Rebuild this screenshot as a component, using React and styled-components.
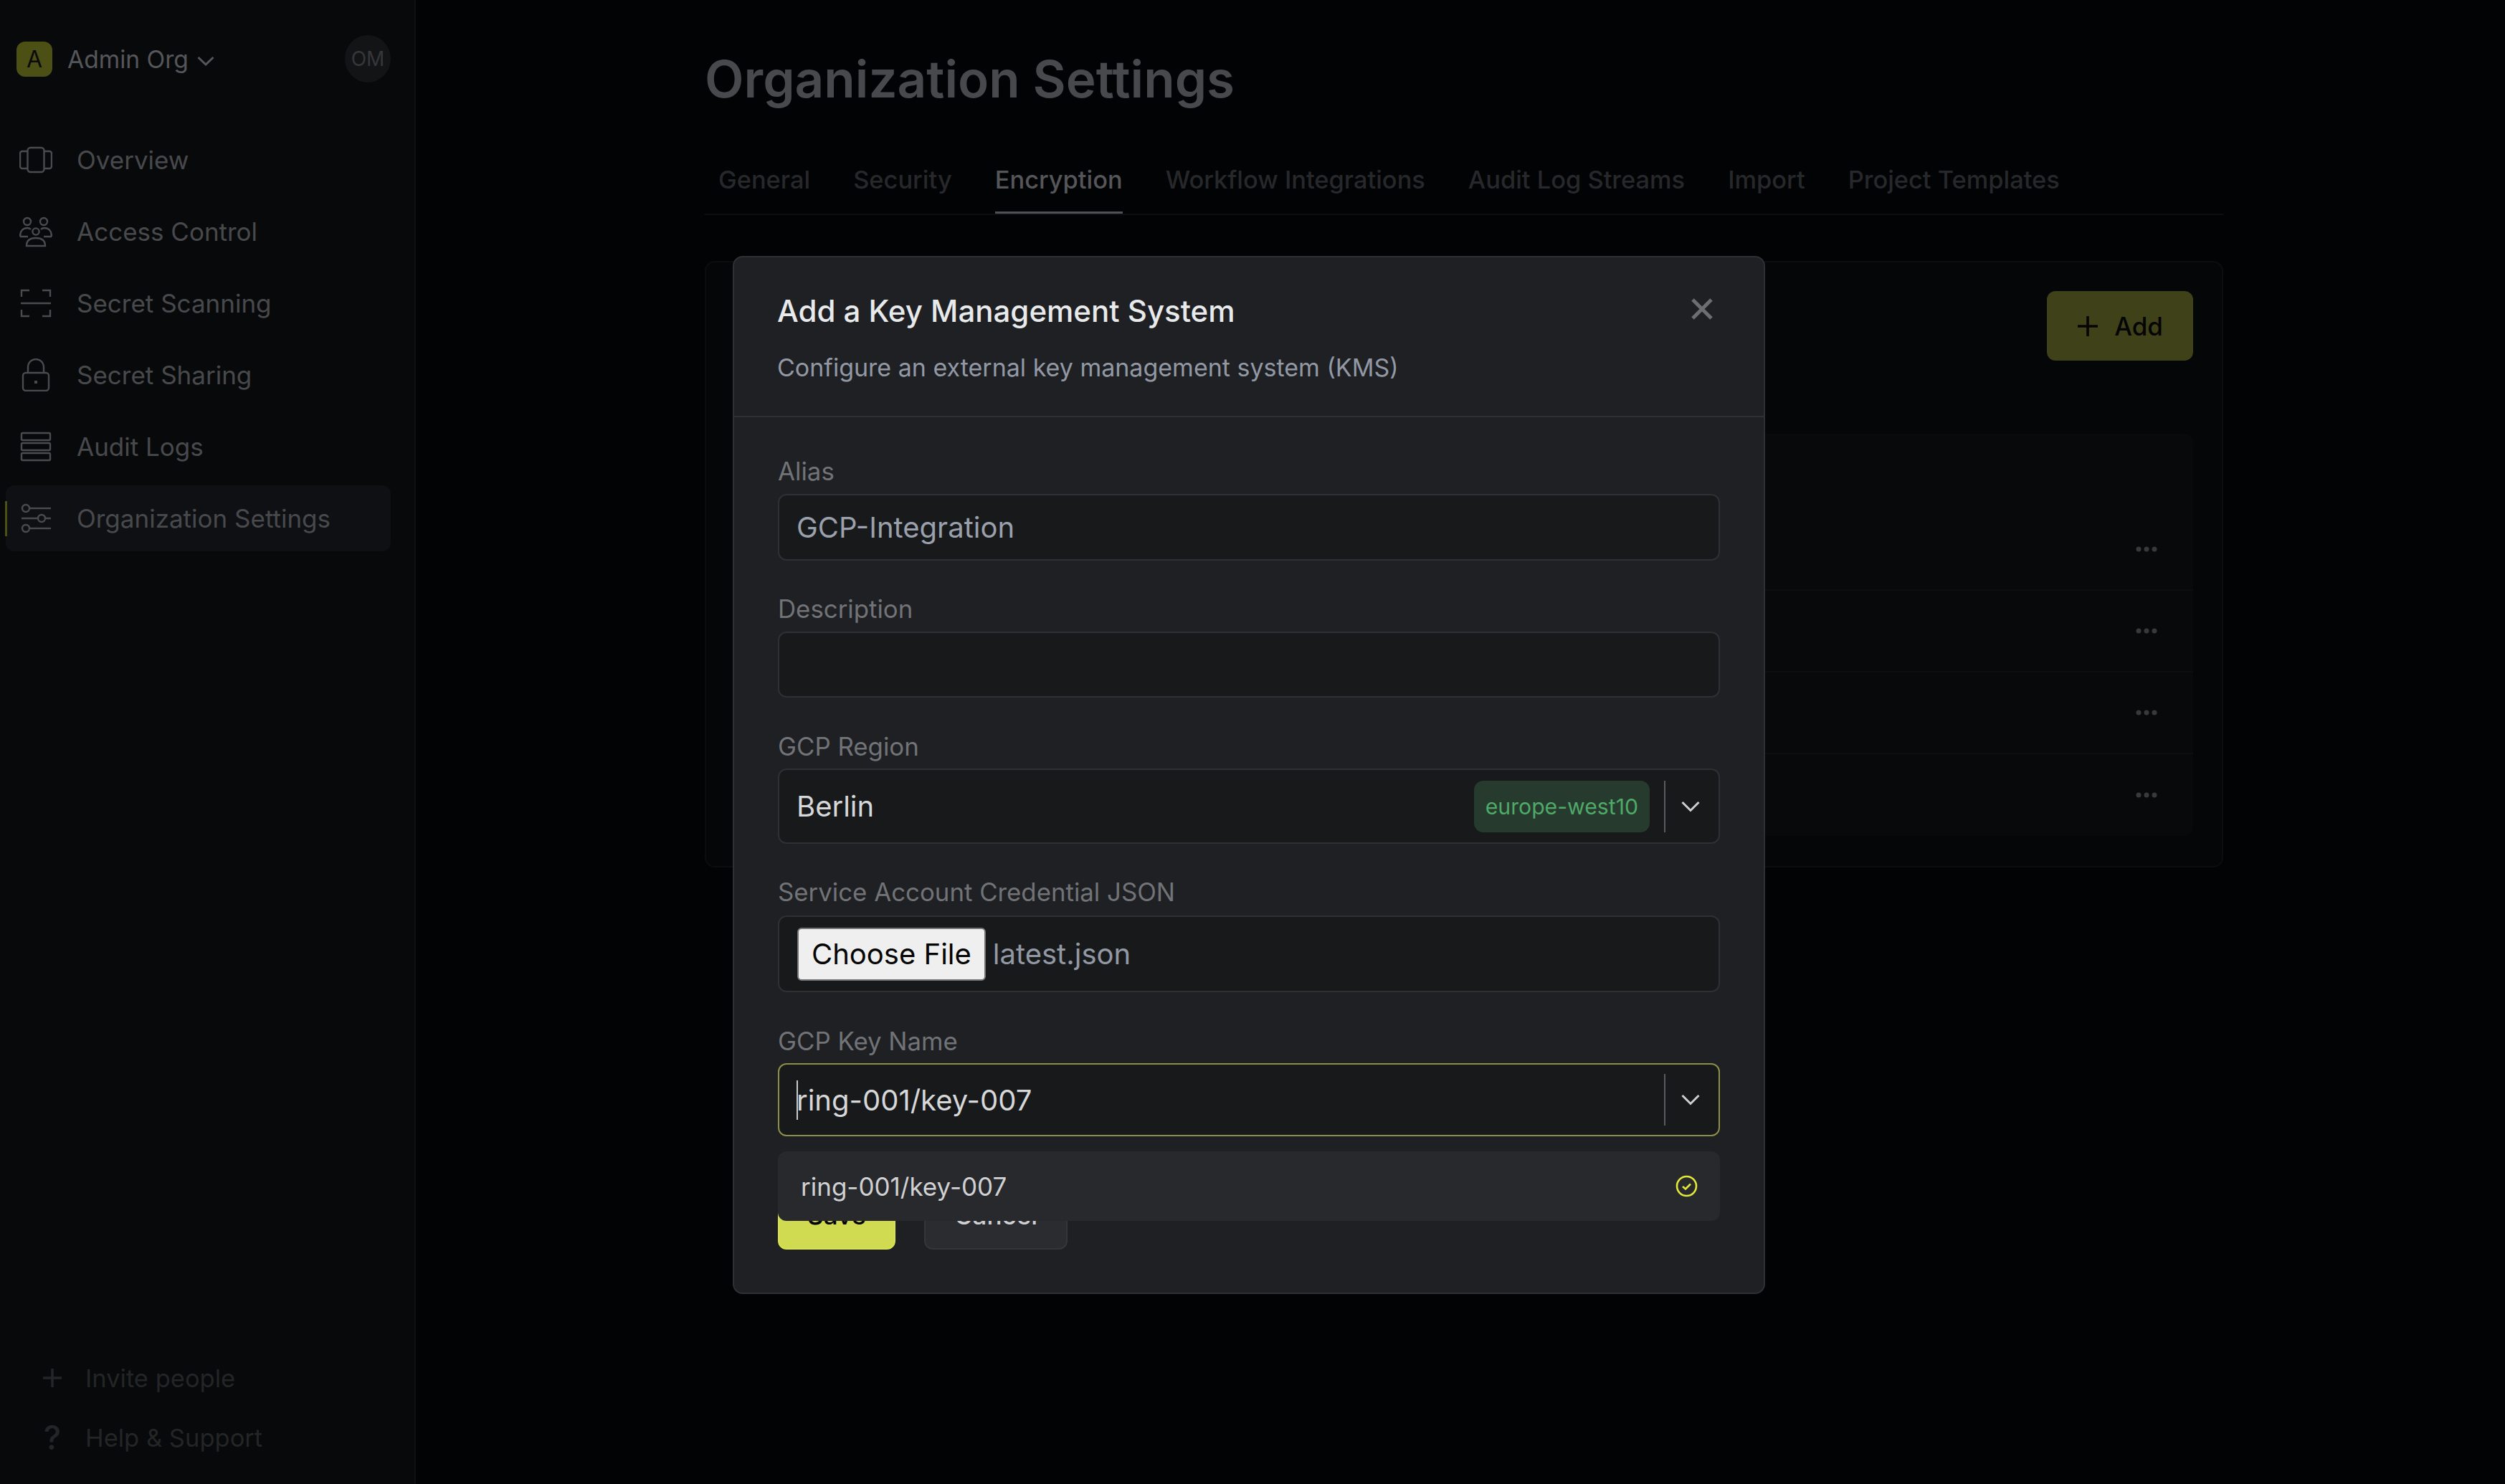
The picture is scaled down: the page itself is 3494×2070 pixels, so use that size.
import styled, { createGlobalStyle } from "styled-components";

const GlobalStyle = createGlobalStyle`
  html, body {
    margin: 0;
    padding: 0;
    background: #020304;
    font-family: "Inter", "Liberation Sans", sans-serif;
  }
  * {
    box-sizing: border-box;
  }
`;

const Page = styled.div`
  position: relative;
  display: flex;
  width: 3494px;
  height: 2070px;
  overflow: hidden;
`;

const Sidebar = styled.aside`
  display: flex;
  flex-direction: column;
  justify-content: space-between;
  width: 580px;
  height: 100%;
  padding: 49px 33px 40px 8px;
  background: #08090b;
  border-right: 2px solid #0f1012;
`;

const OrgHeader = styled.div`
  display: flex;
  align-items: center;
  justify-content: space-between;
  height: 66px;
  padding-left: 15px;
`;

const OrgName = styled.div`
  display: flex;
  align-items: center;
  font-size: 33.6px;
  color: #55565a;
`;

const OrgLogo = styled.div`
  display: flex;
  align-items: center;
  justify-content: center;
  width: 50px;
  height: 49px;
  margin-right: 21px;
  border-radius: 12px;
  background: #4d5015;
  color: #0a0a0a;
  font-size: 32px;
`;

const Caret = styled.svg`
  width: 24px;
  height: 14px;
  margin: 6px 0 0 12px;
  fill: none;
  stroke: #55565a;
  stroke-width: 3;
`;

const Avatar = styled.div`
  display: flex;
  align-items: center;
  justify-content: center;
  width: 64px;
  height: 66px;
  border-radius: 50%;
  background: #131416;
  color: #36373a;
  font-size: 28px;
`;

const Nav = styled.nav`
  display: flex;
  flex-direction: column;
  gap: 8px;
  margin-top: 62px;
`;

const NavRow = styled.div`
  position: relative;
  display: flex;
  align-items: center;
  gap: 34px;
  height: 92px;
  padding-left: 19px;
  border-radius: 12px;
  background: ${(p) => (p.$active ? "#0e1013" : "transparent")};
  color: #48494c;
  font-size: 35px;

  ${(p) =>
    p.$active &&
    `&::before {
      content: "";
      position: absolute;
      left: -1px;
      top: 22px;
      width: 3px;
      height: 49px;
      background: #4d5015;
    }`}
`;

const NavIcon = styled.svg`
  flex: none;
  width: 46px;
  height: 46px;
  fill: none;
  stroke: #4a4b4e;
  stroke-width: 2.4;
`;

const Footer = styled.div`
  display: flex;
  flex-direction: column;
  gap: 33px;
  padding-left: 51px;
`;

const FooterRow = styled.div`
  display: flex;
  align-items: center;
  gap: 32px;
  height: 50px;
  color: #232527;
  font-size: 34.5px;
`;

const FooterIcon = styled.svg`
  flex: none;
  width: 28px;
  height: 28px;
  stroke: #232527;
  stroke-width: 3.6;
`;

const FooterGlyph = styled.span`
  display: flex;
  justify-content: center;
  width: 28px;
  font-size: 46px;
  font-weight: 500;
`;

const Main = styled.main`
  width: 2118px;
  margin-left: 403px;
  padding-top: 70px;
`;

const Title = styled.h1`
  margin: 0;
  height: 80px;
  color: #48494c;
  font-size: 71px;
  font-weight: 600;
  line-height: 80px;
`;

const Tabs = styled.div`
  display: flex;
  gap: 60px;
  height: 95px;
  margin-top: 55px;
  padding-left: 19px;
  border-bottom: 2px solid #0d0e10;
`;

const Tab = styled.div`
  display: flex;
  align-items: center;
  height: 93px;
  border-bottom: 3px solid ${(p) => (p.$active ? "#505154" : "transparent")};
  color: ${(p) => (p.$active ? "#55565a" : "#27282b")};
  font-size: 34.4px;
  font-weight: 500;
`;

const Card = styled.section`
  height: 846px;
  margin-top: 64px;
  padding: 40px;
  border: 2px solid #0c0d0f;
  border-radius: 14px;
  background: #050608;
`;

const CardHead = styled.div`
  display: flex;
  justify-content: flex-end;
`;

const AddButton = styled.div`
  display: flex;
  align-items: center;
  gap: 22px;
  height: 97px;
  padding: 0 42px;
  border-radius: 12px;
  background: #3f4119;
  color: #050505;
  font-size: 35px;
  font-weight: 500;
`;

const Table = styled.div`
  margin-top: 102px;
  padding-top: 105px;
  border-radius: 12px;
  background: #08090b;
`;

const TableRow = styled.div`
  display: flex;
  align-items: center;
  justify-content: flex-end;
  height: 114px;
  padding-right: 50px;
  border-bottom: ${(p) => (p.$last ? "none" : "2px solid #0d0e10")};
`;

const Dots = styled.svg`
  width: 30px;
  height: 8px;
  fill: #39393c;
`;

const Overlay = styled.div`
  position: absolute;
  inset: 0;
  display: flex;
  justify-content: center;
  align-items: flex-start;
  padding: 357px 10px 0 0;
`;

const Modal = styled.div`
  position: relative;
  width: 1440px;
  height: 1448px;
  border: 2px solid #2e3035;
  border-radius: 14px;
  background: #1e2023;
`;

const ModalHead = styled.header`
  padding: 50px 60px 42px;
  border-bottom: 2px solid #2e3035;
`;

const ModalTitle = styled.h2`
  margin: 0;
  color: #e8e9ea;
  font-size: 42px;
  font-weight: 500;
  line-height: 50px;
`;

const ModalSubtitle = styled.p`
  margin: 29px 0 0;
  color: #9299a4;
  font-size: 34px;
  line-height: 50px;
`;

const CloseIcon = styled.svg`
  position: absolute;
  top: 56px;
  right: 70px;
  width: 32px;
  height: 32px;
  stroke: #6d6e72;
  stroke-width: 5;
`;

const ModalBody = styled.div`
  padding: 55px 61px 0;
`;

const Field = styled.div`
  position: relative;
  margin-bottom: ${(p) => p.$gap || 48}px;
`;

const Label = styled.label`
  display: block;
  height: 40px;
  margin-bottom: ${(p) => p.$gap || 12}px;
  color: #717377;
  font-size: 34.8px;
  line-height: 40px;
`;

const Control = styled.div`
  display: flex;
  align-items: center;
  height: ${(p) => p.$height}px;
  padding: 0 26px 0 24px;
  border: 2px solid ${(p) => (p.$focused ? "#8d8e48" : "#2e3036")};
  border-radius: 12px;
  background: #18191b;
  color: ${(p) => p.$color || "#d6d7d9"};
  font-size: 40px;
`;

const Value = styled.span`
  flex: 1;
`;

const Caretted = styled(Value)`
  position: relative;

  &::before {
    content: "";
    position: absolute;
    left: 0;
    top: -3px;
    bottom: -3px;
    width: 2px;
    background: #c9cacc;
  }
`;

const Badge = styled.span`
  display: flex;
  align-items: center;
  height: 72px;
  padding: 0 16px;
  border-radius: 13px;
  background: #263a2e;
  color: #4fa968;
  font-size: 30.2px;
`;

const Divider = styled.span`
  flex: none;
  width: 2px;
  height: 72px;
  margin: 0 22px 0 20px;
  background: #5a5b5e;
`;

const Chevron = styled.svg`
  flex: none;
  width: 26px;
  height: 16px;
  fill: none;
  stroke: #cfcfd1;
  stroke-width: 3;
`;

const FileButton = styled.button`
  height: 74px;
  margin: 0 10px 0 1px;
  padding: 0 18px;
  border: 2px solid #767676;
  border-radius: 6px;
  background: #efefef;
  color: #050505;
  font-family: inherit;
  font-size: 40px;
`;

const FileName = styled.span`
  color: #9299a4;
`;

const Menu = styled.div`
  position: absolute;
  top: calc(100% + 21px);
  left: 0;
  right: 0;
  display: flex;
  align-items: center;
  justify-content: space-between;
  height: 97px;
  padding: 0 31px 0 32px;
  border-radius: 12px;
  background: #27292d;
  color: #d0d1d3;
  font-size: 35px;
  z-index: 2;
`;

const Check = styled.svg`
  width: 31px;
  height: 31px;
  fill: none;
  stroke: #e2e838;
  stroke-width: 2.6;
`;

const Actions = styled.div`
  display: flex;
  gap: 40px;
  margin-top: 61px;
`;

const ActionButton = styled.div`
  display: flex;
  align-items: center;
  justify-content: center;
  width: ${(p) => p.$width}px;
  height: 97px;
  border: 2px solid ${(p) => (p.$primary ? "#d9e24f" : "#34363a")};
  border-radius: 12px;
  background: ${(p) => (p.$primary ? "#d1db52" : "#2b2c30")};
  color: ${(p) => (p.$primary ? "#050505" : "#cfd0d2")};
  font-size: 35px;
  font-weight: 500;
`;

const navItems = [
  {
    label: "Overview",
    icon: (
      <>
        <rect x="11.5" y="6" width="23" height="34" rx="4" />
        <path d="M11 11H4a3 3 0 0 0-3 3v18a3 3 0 0 0 3 3h7M35 11h7a3 3 0 0 1 3 3v18a3 3 0 0 1-3 3h-7" />
      </>
    ),
  },
  {
    label: "Access Control",
    icon: (
      <>
        <circle cx="11" cy="9" r="5" />
        <circle cx="34" cy="9" r="5" />
        <circle cx="23" cy="23" r="4.6" />
        <path d="M1 30c0-9 5-12 10-12 3 0 4 1 5 2M45 30c0-9-5-12-10-12-3 0-4 1-5 2M1 30h11M45 30H34M10 43c0-8 5-11 13-11s13 3 13 11z" />
      </>
    ),
  },
  {
    label: "Secret Scanning",
    icon: (
      <>
        <path d="M3 14V5h11M32 5h11v9M3 32v9h11M32 41h11v-9" />
        <path d="M2 23h42" />
      </>
    ),
  },
  {
    label: "Secret Sharing",
    icon: (
      <>
        <rect x="5" y="20" width="36" height="25" rx="4" />
        <path d="M12 20v-8a11 11 0 0 1 22 0v8" />
        <path d="M23 31v4" strokeWidth="4" />
      </>
    ),
  },
  {
    label: "Audit Logs",
    icon: (
      <>
        <rect x="3" y="4" width="40" height="10" rx="1.5" />
        <rect x="3" y="18" width="40" height="10" rx="1.5" />
        <rect x="3" y="32" width="40" height="10" rx="1.5" />
      </>
    ),
  },
  {
    label: "Organization Settings",
    active: true,
    icon: (
      <>
        <circle cx="9" cy="9" r="5" />
        <path d="M15 9h29" />
        <circle cx="31" cy="23" r="5" />
        <path d="M3 23h22M37 23h7" />
        <circle cx="9" cy="37" r="5" />
        <path d="M15 37h29" />
      </>
    ),
  },
];

const tabs = [
  "General",
  "Security",
  "Encryption",
  "Workflow Integrations",
  "Audit Log Streams",
  "Import",
  "Project Templates",
];

const ChevronDown = () => (
  <Chevron viewBox="0 0 26 16">
    <path d="M1.5 2 13 13.5 24.5 2" />
  </Chevron>
);

export default function App() {
  return (
    <Page>
      <GlobalStyle />
      <Sidebar>
        <div>
          <OrgHeader>
            <OrgName>
              <OrgLogo>A</OrgLogo>
              Admin Org
              <Caret viewBox="0 0 24 14">
                <path d="M1.5 2 12 12 22.5 2" />
              </Caret>
            </OrgName>
            <Avatar>OM</Avatar>
          </OrgHeader>
          <Nav>
            {navItems.map((item) => (
              <NavRow key={item.label} $active={item.active}>
                <NavIcon viewBox="0 0 46 46">{item.icon}</NavIcon>
                {item.label}
              </NavRow>
            ))}
          </Nav>
        </div>
        <Footer>
          <FooterRow>
            <FooterIcon viewBox="0 0 28 28">
              <path d="M14 1v26M1 14h26" />
            </FooterIcon>
            Invite people
          </FooterRow>
          <FooterRow>
            <FooterGlyph>?</FooterGlyph>
            Help &amp; Support
          </FooterRow>
        </Footer>
      </Sidebar>

      <Main>
        <Title>Organization Settings</Title>
        <Tabs>
          {tabs.map((t) => (
            <Tab key={t} $active={t === "Encryption"}>
              {t}
            </Tab>
          ))}
        </Tabs>
        <Card>
          <CardHead>
            <AddButton>
              <svg width="30" height="30" viewBox="0 0 30 30" stroke="#050505" strokeWidth="3.6">
                <path d="M15 1v28M1 15h28" />
              </svg>
              Add
            </AddButton>
          </CardHead>
          <Table>
            {[0, 1, 2, 3].map((i) => (
              <TableRow key={i} $last={i === 3}>
                <Dots viewBox="0 0 30 8">
                  <circle cx="4" cy="4" r="3.5" />
                  <circle cx="15" cy="4" r="3.5" />
                  <circle cx="26" cy="4" r="3.5" />
                </Dots>
              </TableRow>
            ))}
          </Table>
        </Card>
      </Main>

      <Overlay>
        <Modal>
          <ModalHead>
            <ModalTitle>Add a Key Management System</ModalTitle>
            <ModalSubtitle>Configure an external key management system (KMS)</ModalSubtitle>
          </ModalHead>
          <CloseIcon viewBox="0 0 32 32">
            <path d="M3 3l26 26M29 3 3 29" />
          </CloseIcon>
          <ModalBody>
            <Field $gap={47}>
              <Label>Alias</Label>
              <Control $height={93} $color="#9aa0ac">
                <Value>GCP-Integration</Value>
              </Control>
            </Field>
            <Field>
              <Label>Description</Label>
              <Control $height={92} />
            </Field>
            <Field $gap={47}>
              <Label $gap={11}>GCP Region</Label>
              <Control $height={105}>
                <Value>Berlin</Value>
                <Badge>europe-west10</Badge>
                <Divider />
                <ChevronDown />
              </Control>
            </Field>
            <Field>
              <Label $gap={13}>Service Account Credential JSON</Label>
              <Control $height={107}>
                <FileButton>Choose File</FileButton>
                <FileName>latest.json</FileName>
              </Control>
            </Field>
            <Field>
              <Label $gap={11}>GCP Key Name</Label>
              <Control $height={102} $focused>
                <Caretted>ring-001/key-007</Caretted>
                <Divider />
                <ChevronDown />
              </Control>
              <Menu>
                ring-001/key-007
                <Check viewBox="0 0 31 31">
                  <circle cx="15.5" cy="15.5" r="13.5" />
                  <path d="M10 16l4 3.5 7-7" />
                </Check>
              </Menu>
            </Field>
            <Actions>
              <ActionButton $primary $width={164}>
                Save
              </ActionButton>
              <ActionButton $width={200}>Cancel</ActionButton>
            </Actions>
          </ModalBody>
        </Modal>
      </Overlay>
    </Page>
  );
}
